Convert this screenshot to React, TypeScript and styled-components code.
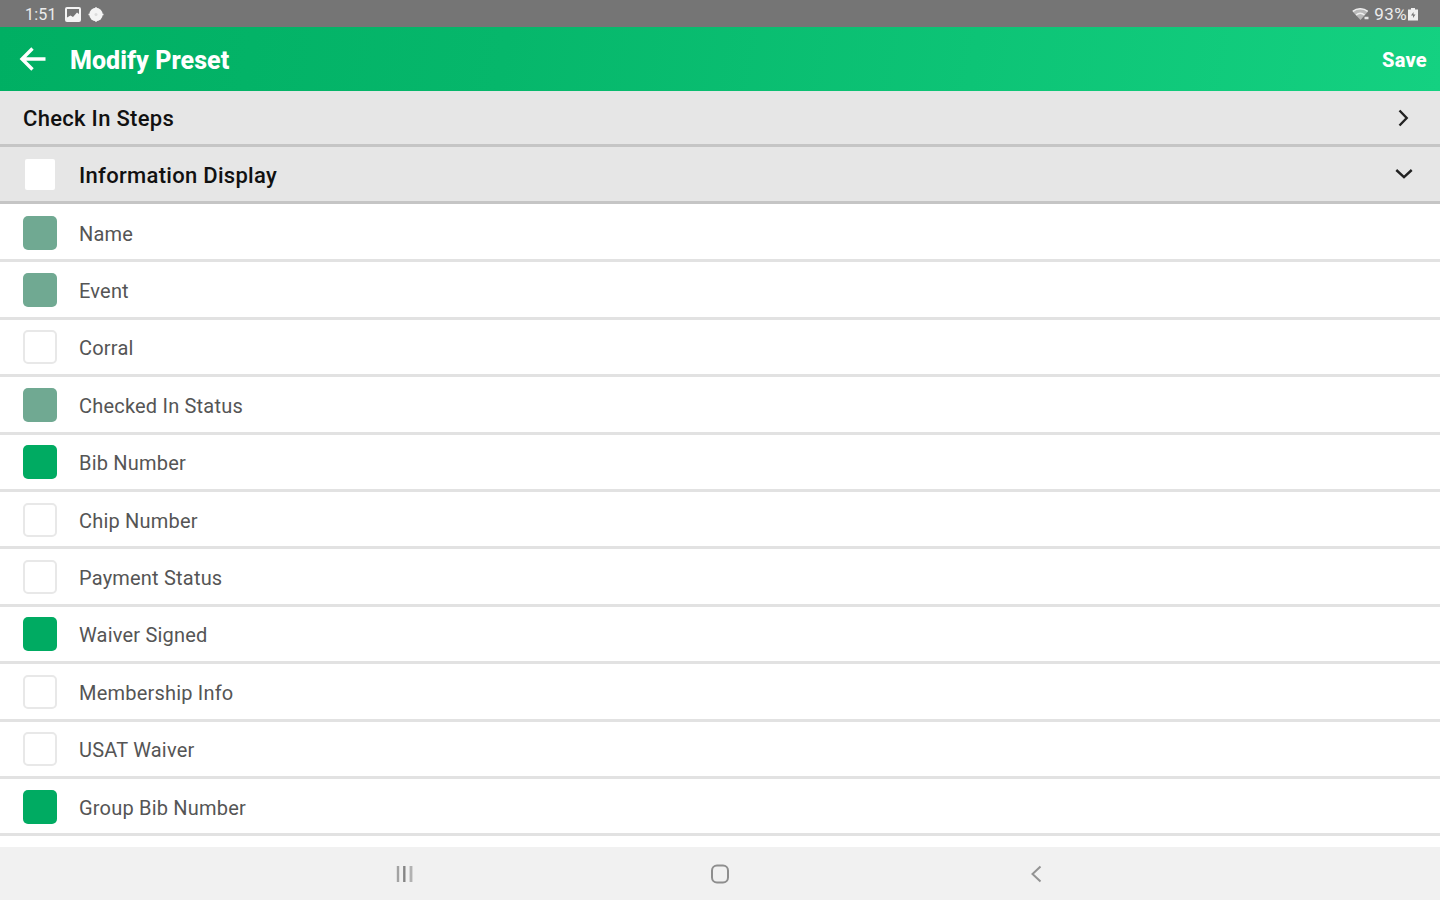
import React from 'react'
import styled, { createGlobalStyle } from 'styled-components'

type CheckState = 'on' | 'off' | 'locked'

interface IField {
  label: string
  state: CheckState
}

const fields: IField[] = [
  { label: 'Name', state: 'locked' },
  { label: 'Event', state: 'locked' },
  { label: 'Corral', state: 'off' },
  { label: 'Checked In Status', state: 'locked' },
  { label: 'Bib Number', state: 'on' },
  { label: 'Chip Number', state: 'off' },
  { label: 'Payment Status', state: 'off' },
  { label: 'Waiver Signed', state: 'on' },
  { label: 'Membership Info', state: 'off' },
  { label: 'USAT Waiver', state: 'off' },
  { label: 'Group Bib Number', state: 'on' },
]

const boxColors = {
  on: '#00ab62',
  off: '#ffffff',
  locked: '#70a992',
}

export default function App() {
  return (
    <StyledScreen>
      <GlobalStyle />
      <StatusBar />
      <StyledHeader>
        <BackArrow />
        <StyledTitle>Modify Preset</StyledTitle>
        <StyledSave>Save</StyledSave>
      </StyledHeader>
      <StyledContent>
        <StyledSection $height={56}>
          <StyledSectionTitle>Check In Steps</StyledSectionTitle>
          <StyledChevron width="20" height="20" viewBox="0 0 20 20">
            <path d="M5.5 2.5 12.7 10 5.5 17.5" />
          </StyledChevron>
        </StyledSection>
        <StyledSection $height={57}>
          <StyledHeaderBox />
          <StyledSectionTitle>Information Display</StyledSectionTitle>
          <StyledChevron width="20" height="20" viewBox="0 0 20 20">
            <path d="M2.3 6 10 13.2 17.7 6" />
          </StyledChevron>
        </StyledSection>
        <StyledList>
          {fields.map((field) => (
            <StyledRow key={field.label}>
              <StyledCheckbox $state={field.state} />
              <StyledLabel>{field.label}</StyledLabel>
            </StyledRow>
          ))}
        </StyledList>
      </StyledContent>
      <NavigationBar />
    </StyledScreen>
  )
}

function StatusBar() {
  return (
    <StyledStatusBar>
      <StyledClock>1:51</StyledClock>
      <svg width="16" height="16" viewBox="0 0 16 16">
        <rect x="1" y="1" width="14" height="13" rx="1" fill="none" stroke="#f4f4f4" strokeWidth="2" />
        <path d="M2 13V10.5L5.5 8.5 8 10 12 5.5 14 7V13Z" fill="#f4f4f4" />
      </svg>
      <StyledDot width="16" height="16" viewBox="0 0 16 16">
        <circle cx="8" cy="7.5" r="6.7" fill="#f4f4f4" />
        <path d="M8 .3V14.7M.5 7.5H15.5" stroke="#f4f4f4" strokeWidth="1.6" />
        <circle cx="8" cy="7.5" r="1.5" fill="#dcdcdc" />
      </StyledDot>
      <StyledStatusRight>
        <svg width="18" height="15" viewBox="0 0 18 15">
          <path d="M.5 4.5C5 .5 11.5.5 16 4.5L8.5 13Z" fill="#b9b9b9" />
          <path d="M.8 4.4C5 .9 11.5.9 15.7 4.4M4 8C6.5 6 10 6 12.5 8" fill="none" stroke="#efefef" strokeWidth="1.5" />
          <path d="M12.5 11H16.5" stroke="#e5e5e5" strokeWidth="2.5" />
        </svg>
        <StyledBattery>93%</StyledBattery>
        <svg width="12" height="14" viewBox="0 0 12 14">
          <path d="M4 0H8V1.5H11V12.5H1V1.5H4Z" fill="#efefef" />
          <path d="M6.5 4 4 7.5H6V10L8.5 6.5H6.5Z" fill="#777" />
        </svg>
      </StyledStatusRight>
    </StyledStatusBar>
  )
}

function BackArrow() {
  return (
    <svg width="28" height="26" viewBox="0 0 28 26">
      <path d="M26.5 13H3M13.5 2.5 3 13 13.5 23.5" fill="none" stroke="#fff" strokeWidth="3.4" />
    </svg>
  )
}

function NavigationBar() {
  return (
    <StyledNavBar>
      <svg width="22" height="22" viewBox="0 0 22 22">
        <path d="M5 3V19" stroke="#a3a3a3" strokeWidth="2.4" />
        <path d="M11.3 3V19" stroke="#858585" strokeWidth="2.4" />
        <path d="M18 3V19" stroke="#b2b2b2" strokeWidth="2.8" />
      </svg>
      <svg width="22" height="22" viewBox="0 0 22 22">
        <rect x="3" y="2.5" width="16" height="17" rx="5" fill="none" stroke="#8e8e8e" strokeWidth="2" />
      </svg>
      <svg width="22" height="22" viewBox="0 0 22 22">
        <path d="M15.5 3.5 7.5 11 15.5 18.5" fill="none" stroke="#939393" strokeWidth="2" />
      </svg>
    </StyledNavBar>
  )
}

const GlobalStyle = createGlobalStyle`
  * {
    box-sizing: border-box;
  }

  body {
    margin: 0;
    font-family: Roboto, sans-serif;
  }

  svg {
    display: block;
    flex-shrink: 0;
  }
`

const StyledScreen = styled.div`
  display: flex;
  flex-direction: column;
  width: 1440px;
  height: 900px;
  overflow: hidden;
  background: #fff;
`

const StyledStatusBar = styled.div`
  display: flex;
  align-items: center;
  flex-shrink: 0;
  height: 27px;
  padding: 2px 21px 0 25px;
  background: #757575;
  color: #ececec;
`

const StyledClock = styled.span`
  width: 40px;
  font-size: 16px;
  letter-spacing: 0.2px;
`

const StyledDot = styled.svg`
  margin-left: 7px;
`

const StyledStatusRight = styled.div`
  display: flex;
  align-items: center;
  margin-left: auto;
`

const StyledBattery = styled.span`
  margin: -2px 0 0 4px;
  font-size: 17px;
  letter-spacing: 0.4px;
`

const StyledHeader = styled.header`
  display: flex;
  align-items: center;
  flex-shrink: 0;
  height: 64px;
  padding: 0 13px 0 19px;
  background: linear-gradient(100deg, #00af63 0%, #06b76b 35%, #14d181 100%);
  color: #fff;
`

const StyledTitle = styled.h1`
  margin: 3px 0 0 23px;
  font-size: 25px;
  font-weight: 800;
  letter-spacing: 0.05px;
`

const StyledSave = styled.span`
  margin: 2px 0 0 auto;
  font-size: 20px;
  font-weight: 800;
  letter-spacing: 0.3px;
`

const StyledContent = styled.main`
  flex: 1;
  min-height: 0;
  overflow: hidden;
`

const StyledSection = styled.div<{ $height: number }>`
  display: flex;
  align-items: center;
  height: ${({ $height }) => $height}px;
  padding: 0 26px 0 23px;
  background: #e6e6e6;
  border-bottom: 3px solid #c5c5c5;
`

const StyledSectionTitle = styled.h2`
  margin: 2px 0 0;
  color: #111;
  font-size: 22px;
  font-weight: 500;
  letter-spacing: 0.3px;
`

const StyledChevron = styled.svg`
  margin-left: auto;
  fill: none;
  stroke: #222;
  stroke-width: 2.4;
`

const StyledHeaderBox = styled.div`
  width: 30px;
  height: 31px;
  margin: 0 24px 0 2px;
  border-radius: 2px;
  background: #fff;
`

const StyledList = styled.div`
  padding-top: 1px;
`

const StyledRow = styled.div`
  display: flex;
  align-items: center;
  height: 57.4px;
  padding: 1px 0 0 23px;
  border-bottom: 3px solid #e2e2e2;
`

const StyledCheckbox = styled.div<{ $state: CheckState }>`
  width: 34px;
  height: 34px;
  margin-right: 22px;
  border: ${({ $state }) => ($state === 'off' ? '2px solid #e8e8e8' : 'none')};
  border-radius: 5px;
  background: ${({ $state }) => boxColors[$state]};
`

const StyledLabel = styled.span`
  margin-top: 2px;
  color: #555;
  font-size: 20px;
  letter-spacing: 0.2px;
`

const StyledNavBar = styled.nav`
  display: flex;
  align-items: center;
  justify-content: center;
  gap: 294px;
  flex-shrink: 0;
  height: 53px;
  background: #f1f1f1;
`
